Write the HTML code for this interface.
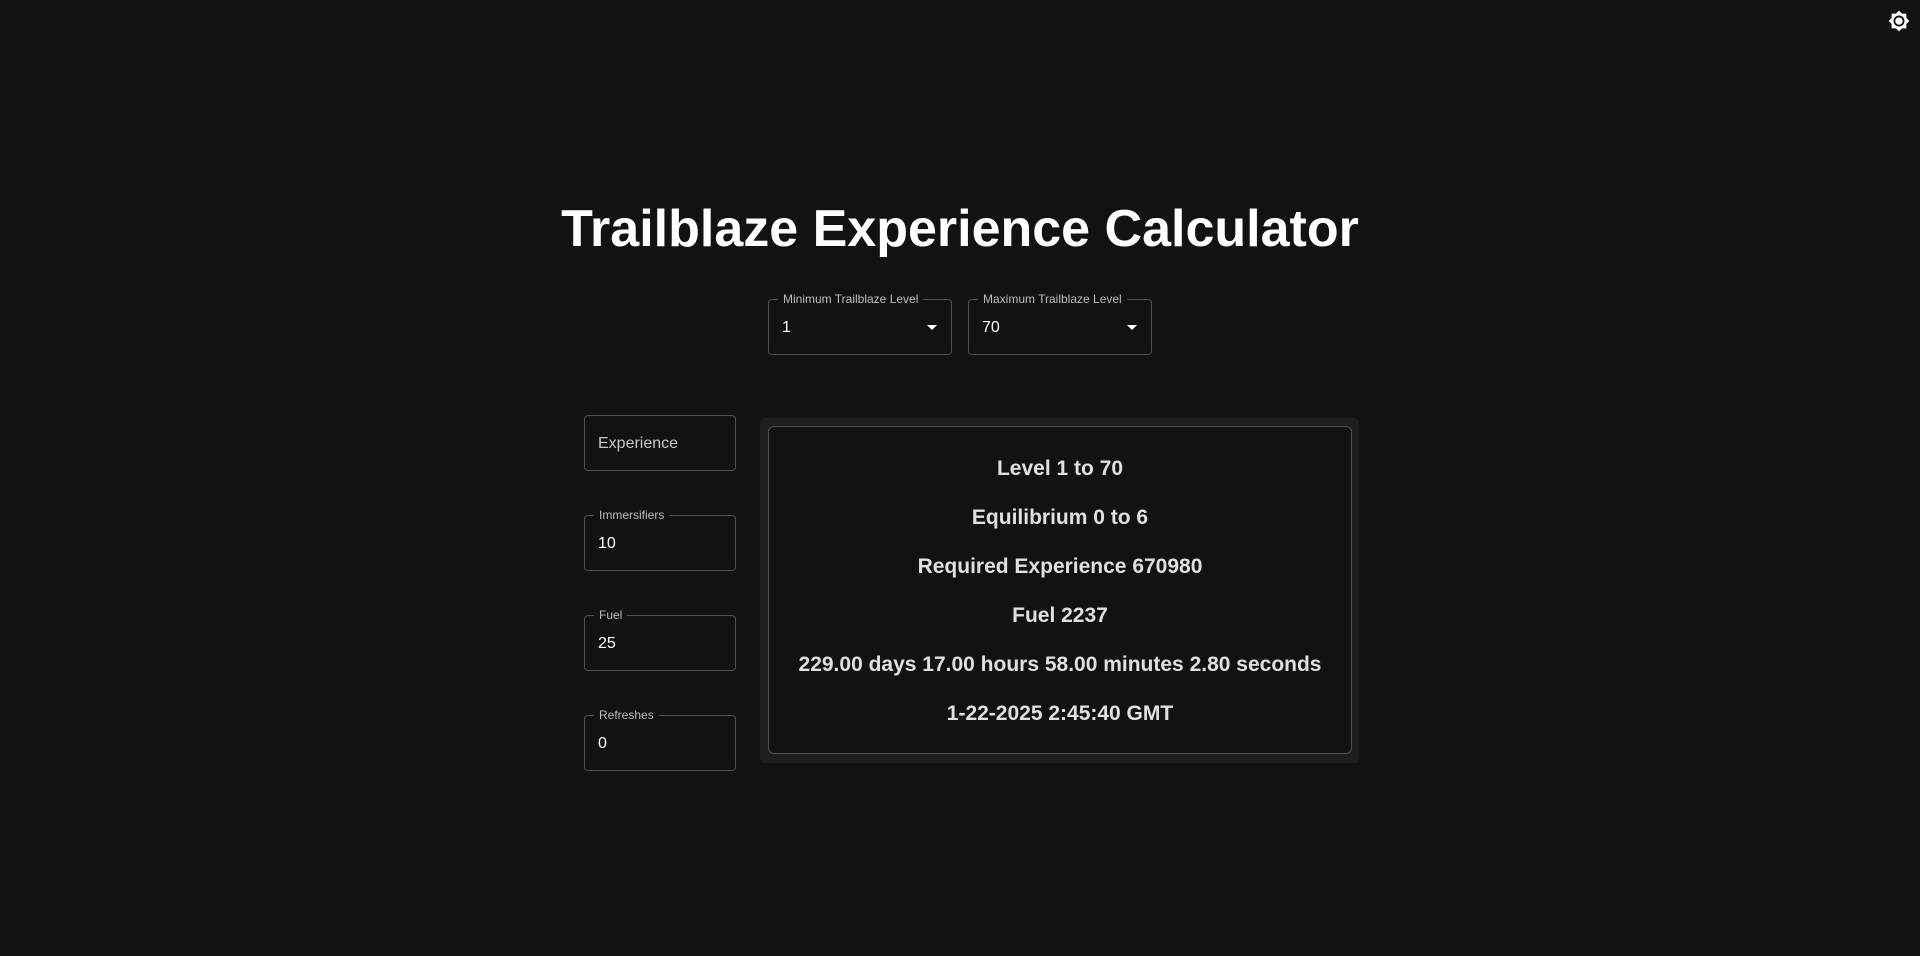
<!DOCTYPE html>
<html><head><meta charset="utf-8"><style>
*{box-sizing:border-box;margin:0;padding:0}
body{width:1920px;height:956px;background:#121212;font-family:"Liberation Sans",Arial,sans-serif;color:#fff;position:relative;overflow:hidden}
h1{position:absolute;left:0;width:1920px;top:198px;text-align:center;font-size:52px;font-weight:bold;line-height:62px}
.f{position:absolute;border:1px solid #4f4f4f;border-radius:4px;height:56px}
.f .l{position:absolute;top:-8px;left:9px;padding:0 5px;background:#121212;font-size:12px;line-height:14px;color:#bdbdbd}
.f .v{position:absolute;left:13px;top:18px;font-size:16px;line-height:20px;color:#fff}
.arr{position:absolute;right:14px;top:25px;width:0;height:0;border-left:5px solid transparent;border-right:5px solid transparent;border-top:5px solid #fff}
.panel{position:absolute;left:760px;top:418px;width:599px;height:345px;background:#1e1e1e;border-radius:4px}
.inner{position:absolute;left:8px;top:8px;width:584px;height:328px;border:1px solid #4f4f4f;border-radius:6px;background:#121212}
.inner p{position:absolute;left:0;width:100%;text-align:center;font-weight:bold;font-size:21px;line-height:24px;color:#e0e0e0}
</style></head><body>
<svg style="position:absolute;left:1888px;top:10px" width="22" height="22" viewBox="0 0 24 24"><path fill="#fff" d="M20 8.69V4h-4.69L12 .69 8.69 4H4v4.69L.69 12 4 15.31V20h4.69L12 23.31 15.31 20H20v-4.69L23.31 12 20 8.69zM12 18c-3.31 0-6-2.690-6-6s2.69-6 6-6 6 2.69 6 6-2.69 6-6 6zm0-10c-2.21 0-4 1.79-4 4s1.79 4 4 4 4-1.79 4-4-1.79-4-4-4z"/></svg>
<h1>Trailblaze Experience Calculator</h1>
<div class="f" style="left:768px;top:299px;width:184px"><span class="l">Minimum Trailblaze Level</span><span class="v">1</span><span class="arr"></span></div>
<div class="f" style="left:968px;top:299px;width:184px"><span class="l">Maximum Trailblaze Level</span><span class="v">70</span><span class="arr"></span></div>
<div class="f" style="left:584px;top:415px;width:152px"><span class="v" style="color:#c8c8c8">Experience</span></div>
<div class="f" style="left:584px;top:515px;width:152px"><span class="l">Immersifiers</span><span class="v">10</span></div>
<div class="f" style="left:584px;top:615px;width:152px"><span class="l">Fuel</span><span class="v">25</span></div>
<div class="f" style="left:584px;top:715px;width:152px"><span class="l">Refreshes</span><span class="v">0</span></div>
<div class="panel"><div class="inner">
<p style="top:30px">Level 1 to 70</p>
<p style="top:79px">Equilibrium 0 to 6</p>
<p style="top:128px">Required Experience 670980</p>
<p style="top:177px">Fuel 2237</p>
<p style="top:226px">229.00 days 17.00 hours 58.00 minutes 2.80 seconds</p>
<p style="top:275px">1-22-2025 2:45:40 GMT</p>
</div></div>
</body></html>
